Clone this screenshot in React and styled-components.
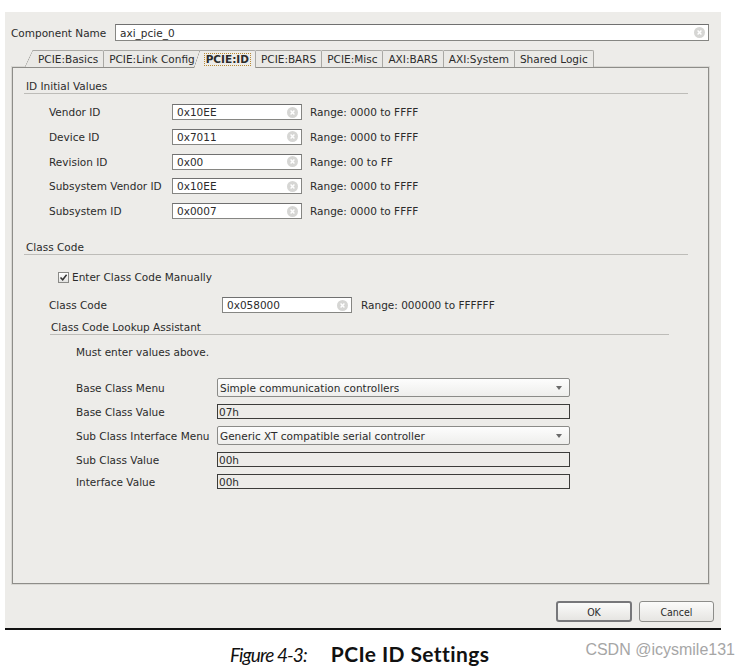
import styled, { createGlobalStyle } from 'styled-components';

const GlobalStyle = createGlobalStyle`
  body {
    margin: 0;
    background: #ffffff;
  }
`;

const BG = '#edece9';

// Page + dialog
const Page = styled.div`
  width: 749px;
  height: 671px;
  overflow: hidden;
  background: #ffffff;
  font-family: "DejaVu Sans", "Liberation Sans", sans-serif;
`;

const Dialog = styled.div`
  display: flex;
  flex-direction: column;
  width: 716px;
  height: 616px;
  margin: 12px 0 0 5px;
  background: ${BG};
  border-bottom: 2px solid #111;
  font-size: 10.5px;
  color: #2b2b2b;
`;

const NameRow = styled.div`
  display: flex;
  align-items: center;
  margin: 12px 12px 0 6px;
`;

const Label = styled.span`
  flex: none;
  width: ${(p) => p.$w}px;
  white-space: nowrap;
`;

const TextField = styled.div`
  display: flex;
  align-items: center;
  flex: ${(p) => (p.$w ? 'none' : '1')};
  width: ${(p) => (p.$w ? `${p.$w}px` : 'auto')};
  height: ${(p) => p.$h || 16}px;
  box-sizing: border-box;
  padding: 0 3px 0 4px;
  background: #ffffff;
  border: 1px solid #868683;
  border-top-color: #707070;
`;

const FieldText = styled.span`
  flex: 1;
  white-space: nowrap;
`;

const Range = styled.span`
  margin-left: ${(p) => p.$ml}px;
  white-space: nowrap;
`;

const ClearIcon = () => (
  <svg width="11" height="11" viewBox="0 0 11 11">
    <circle cx="5.5" cy="5.5" r="5.5" fill="#d6d6d4" />
    <path d="M3.6 3.6 L7.4 7.4 M7.4 3.6 L3.6 7.4" stroke="#ffffff" strokeWidth="1.4" />
  </svg>
);

// Tabs
const TabStrip = styled.div`
  display: flex;
  align-items: flex-end;
  height: 18px;
  margin: 8px 0 0 28px;
  position: relative;
  z-index: 1;
`;

const Tab = styled.div`
  position: relative;
  display: flex;
  align-items: center;
  height: ${(p) => (p.$selected ? 18 : 17)}px;
  margin-bottom: ${(p) => (p.$selected ? -1 : 0)}px;
  margin-left: ${(p) => (p.$selected ? -1 : 0)}px;
  box-sizing: border-box;
  padding: 0 ${(p) => (p.$selected ? 4 : 5)}px;
  background: ${(p) => (p.$selected ? BG : '#eae9e6')};
  border-top: 1px solid #a9a8a4;
  border-right: 1px solid #a9a8a4;
  border-top-right-radius: 2px;
  font-weight: ${(p) => (p.$selected ? 'bold' : 'normal')};
  white-space: nowrap;
  z-index: ${(p) => (p.$selected ? 2 : 1)};

  &::before {
    content: ${(p) => (p.$slant ? "''" : 'none')};
    position: absolute;
    top: -1px;
    bottom: 0;
    left: -${(p) => p.$slant}px;
    width: ${(p) => p.$slant}px;
    background: linear-gradient(
      to bottom right,
      transparent calc(50% - 0.6px),
      #a9a8a4 50%,
      ${(p) => (p.$selected ? BG : '#eae9e6')} calc(50% + 0.6px)
    );
  }
`;

const FocusText = styled.span`
  padding: 0 1px;
  line-height: 11px;
  border: 1px dotted #b98a32;
`;

// Tab panel
const Panel = styled.div`
  display: flex;
  flex-direction: column;
  height: 517px;
  margin: 0 12px 0 7px;
  box-sizing: border-box;
  padding: 12px 20px 0 11px;
  border: 1px solid #8e8d89;
  box-shadow: 0 0 0 1px #d9d8d4;
`;

const SectionTitle = styled.div`
  margin-top: ${(p) => p.$mt || 0}px;
  padding-left: ${(p) => p.$pl || 2}px;
  line-height: 13px;
  border-bottom: 1px solid #bdbcb8;
`;

const IdRows = styled.div`
  display: flex;
  flex-direction: column;
  gap: 8.8px;
  margin-top: 10px;
  padding-left: 25px;
`;

const Row = styled.div`
  display: flex;
  align-items: center;
  height: 16px;
`;

const CheckRow = styled.label`
  display: flex;
  align-items: center;
  gap: 3px;
  height: 14px;
  margin-top: 15px;
  padding-left: 34px;
`;

const CheckBox = styled.span`
  display: flex;
  align-items: center;
  justify-content: center;
  width: 11px;
  height: 11px;
  box-sizing: border-box;
  background: linear-gradient(#ffffff, #e4e4e2);
  border: 1px solid #8a8a87;
`;

const ClassRow = styled(Row)`
  margin-top: 13px;
  padding-left: 25px;
`;

const Lookup = styled.div`
  margin: 8px 19px 0 26px;
`;

const Note = styled.div`
  margin-top: 11px;
  padding-left: 26px;
  line-height: 12px;
`;

const MenuGrid = styled.div`
  display: grid;
  grid-template-columns: 141px 353px;
  row-gap: 7px;
  align-items: center;
  margin-top: 20px;
  padding-left: 26px;
`;

const Combo = styled.div`
  display: flex;
  align-items: center;
  height: 19px;
  box-sizing: border-box;
  padding: 0 7px 0 2px;
  background: linear-gradient(#fdfdfd, #eeeeec);
  border: 1px solid #8b8b88;
  border-radius: 2px;
`;

const Arrow = styled.span`
  width: 0;
  height: 0;
  border-left: 3.5px solid transparent;
  border-right: 3.5px solid transparent;
  border-top: 4px solid #6a6a6a;
`;

const ReadOnly = styled.div`
  display: flex;
  align-items: center;
  height: 15px;
  box-sizing: border-box;
  padding-left: 1px;
  background: ${BG};
  border: 1px solid #3c3c3a;
`;

// Buttons
const ButtonRow = styled.div`
  display: flex;
  justify-content: flex-end;
  gap: 7px;
  margin: 17px 7px 0 0;
`;

const Button = styled.button`
  width: ${(p) => p.$w}px;
  height: 21px;
  padding: 0;
  font-family: "DejaVu Sans Condensed", "DejaVu Sans", sans-serif;
  font-size: 10.5px;
  color: #2b2b2b;
  background: linear-gradient(#fbfbfa, #e6e5e2);
  border: ${(p) => (p.$default ? '2px solid #77777a' : '1px solid #8d8d8a')};
  border-radius: 3px;
`;

// Caption under the screenshot
const Footer = styled.div`
  display: flex;
  align-items: flex-start;
  height: 41px;
`;

const Caption = styled.div`
  display: flex;
  align-items: baseline;
  gap: 24px;
  margin: 12px 0 0 230px;
  font-family: Lato, "Open Sans", sans-serif;
  line-height: 24px;
  color: #111;
`;

const CaptionNum = styled.span`
  font-size: 19px;
  font-style: italic;
  letter-spacing: -0.9px;
`;

const CaptionTitle = styled.span`
  font-size: 21px;
  font-weight: bold;
  letter-spacing: 0.4px;
`;

const Watermark = styled.div`
  margin: 11px 14px 0 auto;
  font-family: "Liberation Sans", Arial, sans-serif;
  font-size: 16px;
  line-height: 18px;
  color: #a6a6a6;
`;

const tabs = [
  'PCIE:Basics',
  'PCIE:Link Config',
  'PCIE:ID',
  'PCIE:BARS',
  'PCIE:Misc',
  'AXI:BARS',
  'AXI:System',
  'Shared Logic',
];

const idRows = [
  ['Vendor ID', '0x10EE', 'Range: 0000 to FFFF'],
  ['Device ID', '0x7011', 'Range: 0000 to FFFF'],
  ['Revision ID', '0x00', 'Range: 00 to FF'],
  ['Subsystem Vendor ID', '0x10EE', 'Range: 0000 to FFFF'],
  ['Subsystem ID', '0x0007', 'Range: 0000 to FFFF'],
];

function App() {
  return (
    <Page>
      <GlobalStyle />
      <Dialog>
        <NameRow>
          <Label $w={104}>Component Name</Label>
          <TextField $h={17}>
            <FieldText>axi_pcie_0</FieldText>
            <ClearIcon />
          </TextField>
        </NameRow>

        <TabStrip>
          {tabs.map((t, i) => {
            const selected = t === 'PCIE:ID';
            return (
              <Tab key={t} $selected={selected} $slant={i === 0 ? 8 : selected ? 6 : 0}>
                {selected ? <FocusText>{t}</FocusText> : t}
              </Tab>
            );
          })}
        </TabStrip>

        <Panel>
          <SectionTitle>ID Initial Values</SectionTitle>
          <IdRows>
            {idRows.map(([label, value, range]) => (
              <Row key={label}>
                <Label $w={123}>{label}</Label>
                <TextField $w={130}>
                  <FieldText>{value}</FieldText>
                  <ClearIcon />
                </TextField>
                <Range $ml={8}>{range}</Range>
              </Row>
            ))}
          </IdRows>

          <SectionTitle $mt={22}>Class Code</SectionTitle>
          <CheckRow>
            <CheckBox>
              <svg width="9" height="9" viewBox="0 0 9 9">
                <path d="M1.5 4.5 L3.7 6.8 L7.6 1.8" fill="none" stroke="#333" strokeWidth="1.5" />
              </svg>
            </CheckBox>
            Enter Class Code Manually
          </CheckRow>
          <ClassRow>
            <Label $w={173}>Class Code</Label>
            <TextField $w={130}>
              <FieldText>0x058000</FieldText>
              <ClearIcon />
            </TextField>
            <Range $ml={9}>Range: 000000 to FFFFFF</Range>
          </ClassRow>

          <Lookup>
            <SectionTitle $pl={1}>Class Code Lookup Assistant</SectionTitle>
            <Note>Must enter values above.</Note>
            <MenuGrid>
              <Label>Base Class Menu</Label>
              <Combo>
                <FieldText>Simple communication controllers</FieldText>
                <Arrow />
              </Combo>
              <Label>Base Class Value</Label>
              <ReadOnly>07h</ReadOnly>
              <Label>Sub Class Interface Menu</Label>
              <Combo>
                <FieldText>Generic XT compatible serial controller</FieldText>
                <Arrow />
              </Combo>
              <Label>Sub Class Value</Label>
              <ReadOnly>00h</ReadOnly>
              <Label>Interface Value</Label>
              <ReadOnly>00h</ReadOnly>
            </MenuGrid>
          </Lookup>
        </Panel>

        <ButtonRow>
          <Button $w={76} $default>OK</Button>
          <Button $w={75}>Cancel</Button>
        </ButtonRow>
      </Dialog>

      <Footer>
        <Caption>
          <CaptionNum>Figure 4-3:</CaptionNum>
          <CaptionTitle>PCIe ID Settings</CaptionTitle>
        </Caption>
        <Watermark>CSDN @icysmile131</Watermark>
      </Footer>
    </Page>
  );
}

export default App;
